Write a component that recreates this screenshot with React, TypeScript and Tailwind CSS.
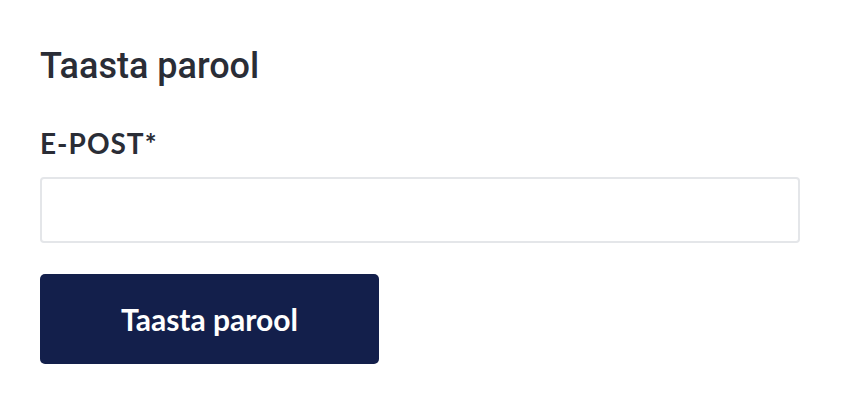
export default function App() {
  return (
    <div className="min-h-screen bg-white px-10 pt-[48px]">
      <h1 className="text-[36px] font-medium leading-none text-[#2a2d36] [font-family:Roboto,sans-serif]">
        Taasta parool
      </h1>
      <form className="mt-[45px] [font-family:Lato,sans-serif]" onSubmit={(e) => e.preventDefault()}>
        <label htmlFor="email" className="block text-[28px] font-bold leading-none tracking-[1px] text-[#2a2d36]">
          E-POST*
        </label>
        <input
          id="email"
          type="email"
          className="mt-[20px] block h-[66px] w-[760px] rounded-[4px] border-2 border-[#e4e6e9] bg-white px-4 text-lg outline-none"
        />
        <button
          type="submit"
          className="mt-[31px] flex h-[90px] w-[339px] items-center justify-center rounded-[5px] bg-[#131f4b] text-[30px] font-bold text-white"
        >
          Taasta parool
        </button>
      </form>
    </div>
  );
}
